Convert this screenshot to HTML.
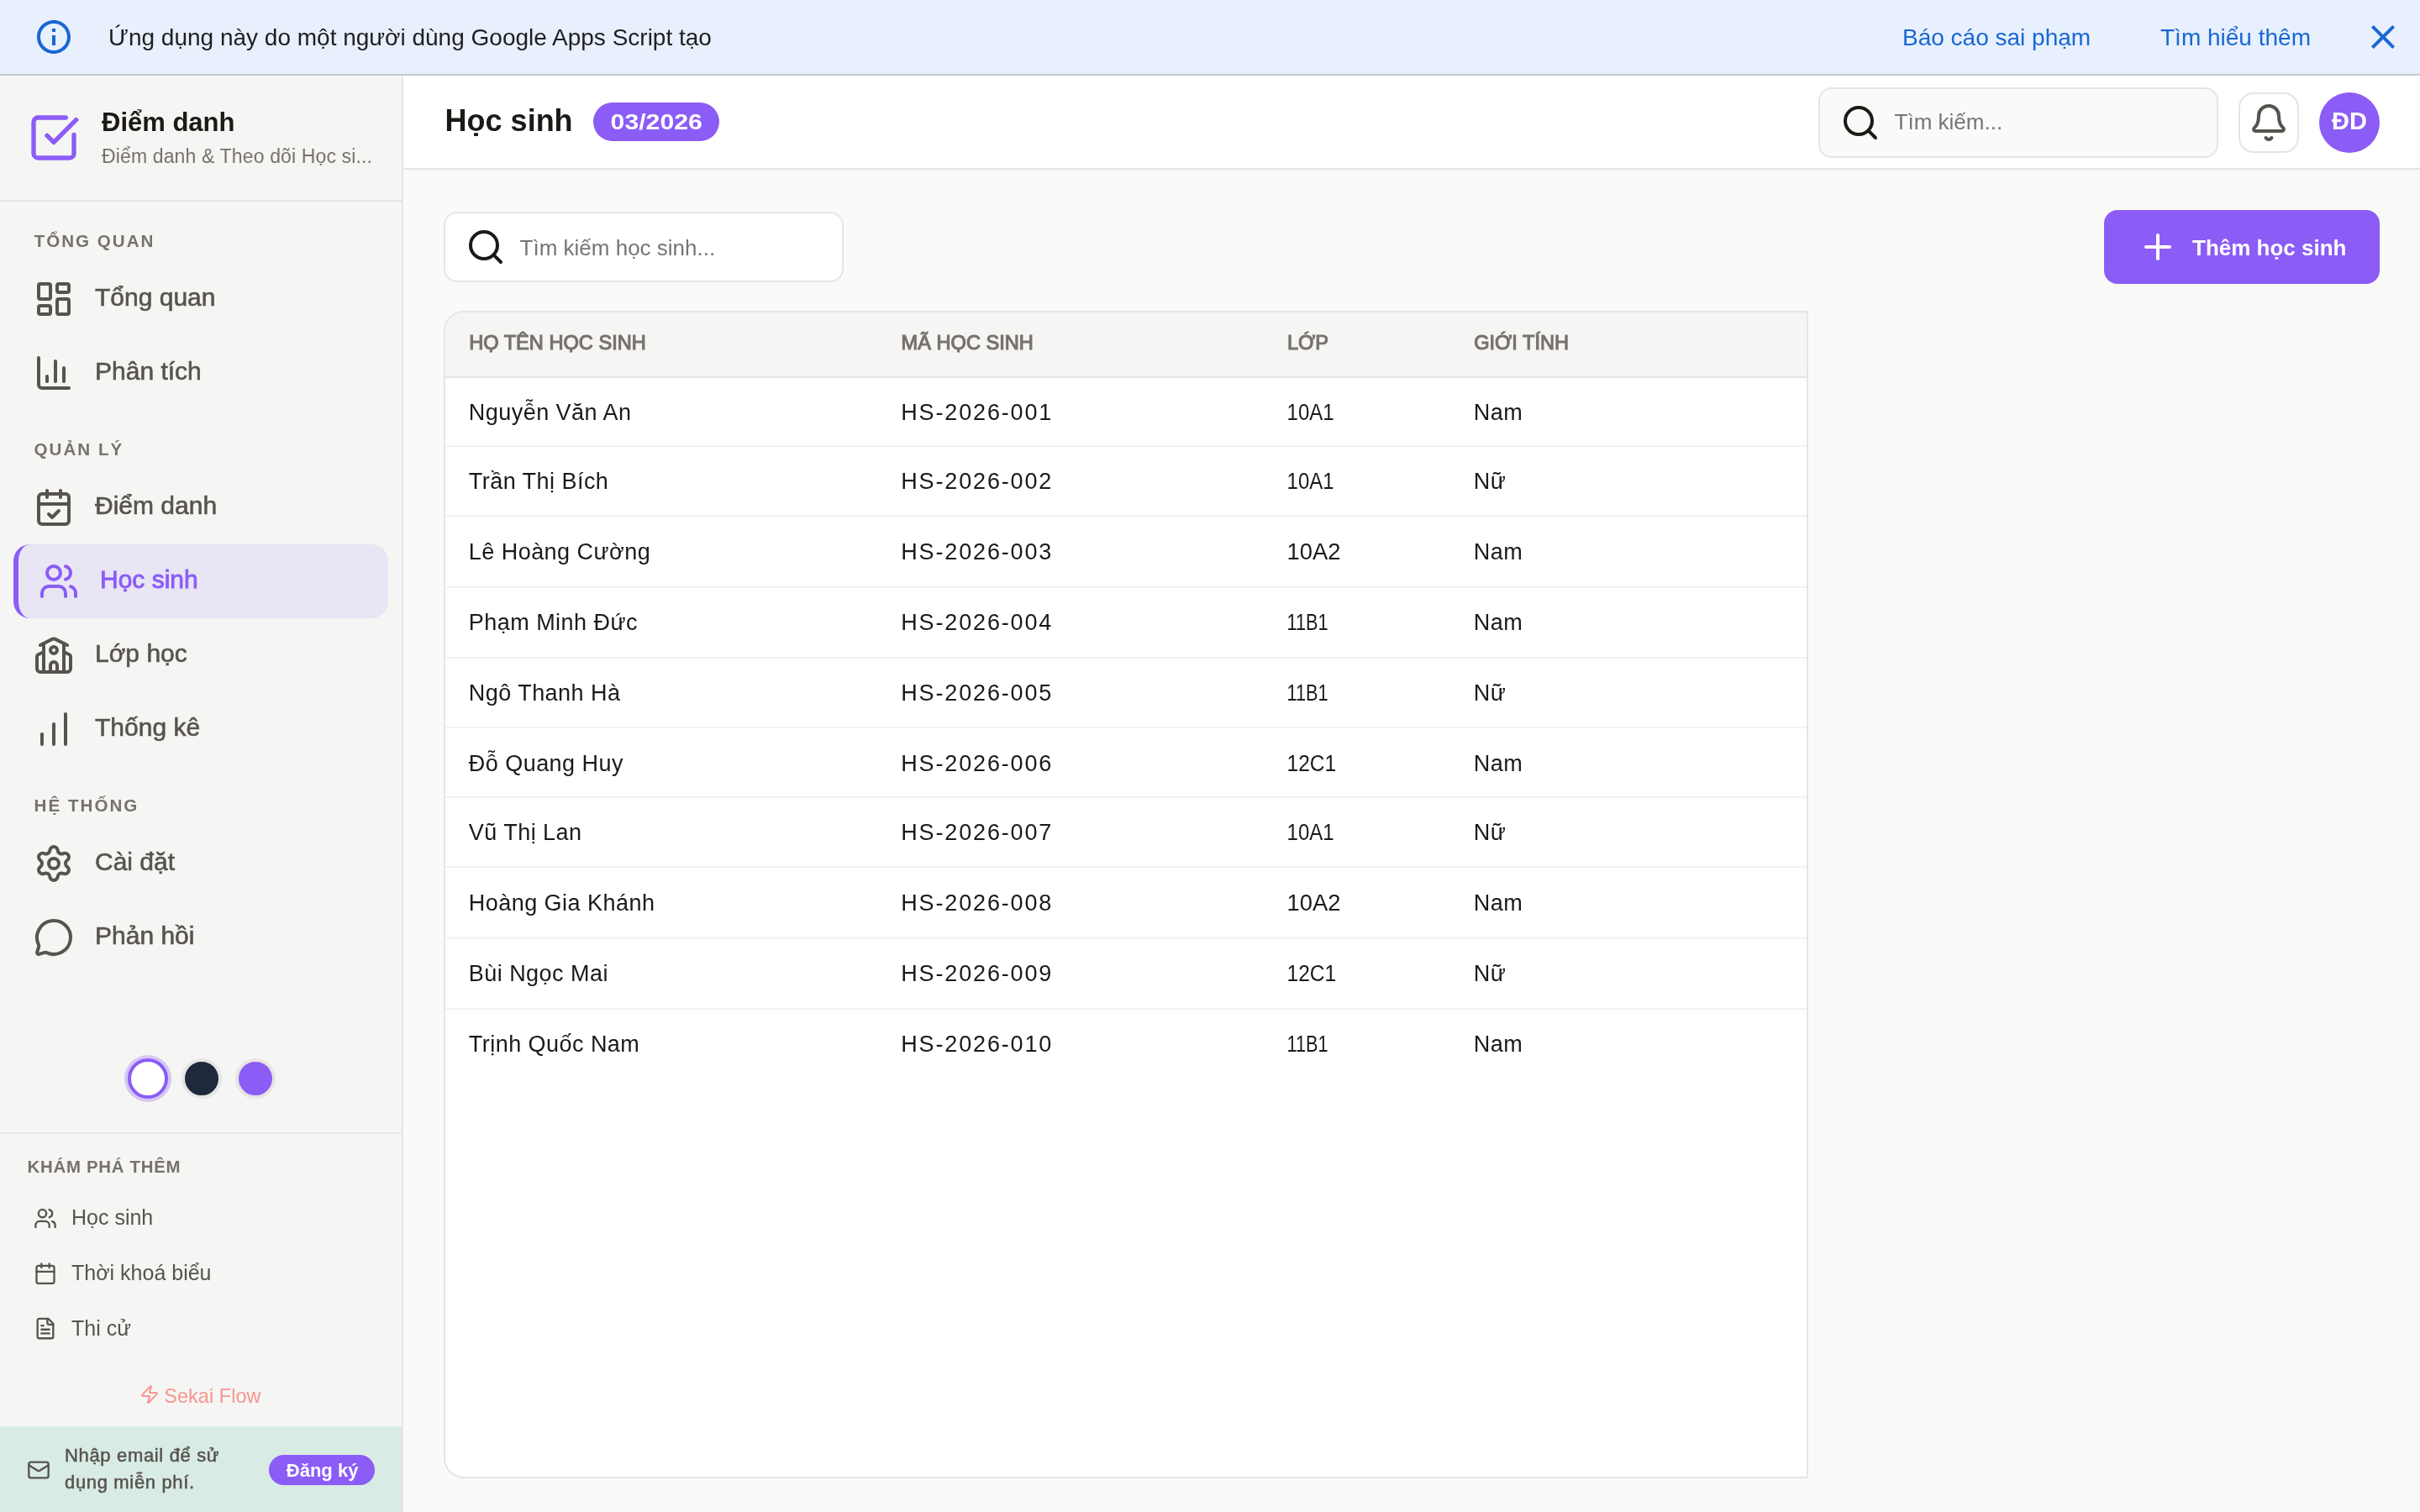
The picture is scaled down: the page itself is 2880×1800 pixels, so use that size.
<!DOCTYPE html>
<html lang="vi">
<head>
<meta charset="utf-8">
<title>Học sinh</title>
<style>
*{box-sizing:border-box;margin:0;padding:0}
html,body{width:1440px;height:900px;overflow:hidden}
@media (min-width:2000px){html{zoom:2}}
body{font-family:"Liberation Sans",sans-serif;background:#fafaf9;position:relative;color:#1c1917}
.b{position:absolute}
#ov{position:absolute;left:0;top:0;width:1440px;height:900px;font-family:"Liberation Sans",sans-serif;will-change:transform}
#ov svg{fill:none;stroke-width:2;stroke-linecap:round;stroke-linejoin:round;overflow:visible}
#ov text{white-space:pre}
</style>
</head>
<body>
<div class="b" style="left:0;top:0;width:1440px;height:45px;background:#e8f0fe;border-bottom:1px solid #c7c9cc"></div>
<div class="b" style="left:0;top:45px;width:240px;height:855px;background:#f5f5f4;border-right:1px solid #e7e5e4"></div>
<div class="b" style="left:0;top:119px;width:239px;height:1px;background:#e7e5e4"></div>
<div class="b" style="left:8px;top:324px;width:223px;height:44px;background:#e8e5f4;border-radius:10px;border-left:3px solid #8b5cf6"></div>
<div class="b" style="left:76px;top:630px;width:24px;height:24px;border-radius:50%;background:#fff;border:2px solid #8b5cf6;box-shadow:0 0 0 2px rgba(139,92,246,.3)"></div>
<div class="b" style="left:108px;top:630px;width:24px;height:24px;border-radius:50%;background:#1e293b;border:2px solid #e7e5e4"></div>
<div class="b" style="left:140px;top:630px;width:24px;height:24px;border-radius:50%;background:#8b5cf6;border:2px solid #e7e5e4"></div>
<div class="b" style="left:0;top:674px;width:239px;height:1px;background:#e7e5e4"></div>
<div class="b" style="left:0;top:849px;width:239px;height:51px;background:#d9ebe5"></div>
<div class="b" style="left:160px;top:866px;width:63px;height:18px;border-radius:9px;background:#8b5cf6"></div>
<div class="b" style="left:240px;top:45px;width:1200px;height:56px;background:#fff;border-bottom:1px solid #e7e5e4"></div>
<div class="b" style="left:353px;top:61px;width:75px;height:23px;border-radius:12px;background:#8b5cf6"></div>
<div class="b" style="left:1082px;top:52px;width:238px;height:42px;border-radius:8px;background:#fafaf9;border:1px solid #e7e5e4"></div>
<div class="b" style="left:1332px;top:55px;width:36px;height:36px;border-radius:9px;background:#fff;border:1px solid #e7e5e4"></div>
<div class="b" style="left:1380px;top:55px;width:36px;height:36px;border-radius:50%;background:#8b5cf6"></div>
<div class="b" style="left:264px;top:126px;width:238px;height:42px;border-radius:8px;background:#fff;border:1px solid #e7e5e4"></div>
<div class="b" style="left:1252px;top:125px;width:164px;height:44px;border-radius:8px;background:#8b5cf6"></div>
<div class="b" style="left:264px;top:185px;width:812px;height:695px;border-radius:12px 0 0 12px;background:#fff;border:1px solid #e7e5e4;overflow:hidden"><div class="b" style="left:0;top:0;width:810px;height:39px;background:#f5f5f4;border-bottom:1px solid #e7e5e4"></div></div>
<div class="b" style="left:265px;top:264.80px;width:810px;height:1px;background:#f3f2f1"></div>
<div class="b" style="left:265px;top:306.60px;width:810px;height:1px;background:#f3f2f1"></div>
<div class="b" style="left:265px;top:348.90px;width:810px;height:1px;background:#f3f2f1"></div>
<div class="b" style="left:265px;top:391.05px;width:810px;height:1px;background:#f3f2f1"></div>
<div class="b" style="left:265px;top:432.60px;width:810px;height:1px;background:#f3f2f1"></div>
<div class="b" style="left:265px;top:474.05px;width:810px;height:1px;background:#f3f2f1"></div>
<div class="b" style="left:265px;top:515.50px;width:810px;height:1px;background:#f3f2f1"></div>
<div class="b" style="left:265px;top:557.80px;width:810px;height:1px;background:#f3f2f1"></div>
<div class="b" style="left:265px;top:600.00px;width:810px;height:1px;background:#f3f2f1"></div>
<svg id="ov" viewBox="0 0 1440 900">
<svg x="20" y="10" width="24" height="24" viewBox="0 0 24 24" style="fill:#1967d2;stroke:none"><path d="M11 7h2v2h-2zm0 4h2v6h-2zm1-9C6.48 2 2 6.48 2 12s4.48 10 10 10 10-4.48 10-10S17.52 2 12 2zm0 18c-4.41 0-8-3.59-8-8s3.59-8 8-8 8 3.59 8 8-3.59 8-8 8z"/></svg>
<text x="64.50" y="26.90" font-size="14" fill="#1f1f1f">Ứng dụng này do một người dùng Google Apps Script tạo</text>
<text x="1132.00" y="26.90" font-size="14" fill="#1967d2">Báo cáo sai phạm</text>
<text x="1285.50" y="26.90" font-size="14" fill="#1967d2">Tìm hiểu thêm</text>
<svg x="1406" y="10" width="24" height="24" viewBox="0 0 24 24" style="fill:#1967d2;stroke:none"><path d="M19 6.41L17.59 5 12 10.59 6.41 5 5 6.41 10.59 12 5 17.59 6.41 19 12 13.41 17.59 19 19 17.59 13.41 12z"/></svg>
<svg x="16" y="66" width="32" height="32" viewBox="0 0 24 24" stroke="#8b5cf6"><path d="M21 10.656V19a2 2 0 0 1-2 2H5a2 2 0 0 1-2-2V5a2 2 0 0 1 2-2h12.344"/><path d="m9 11 3 3L22 4"/></svg>
<text x="60.50" y="78.00" font-size="15.5" fill="#1c1917" font-weight="bold">Điểm danh</text>
<text x="60.50" y="97.00" font-size="11.5" fill="#78716c" style="letter-spacing:0.07px;">Điểm danh &amp; Theo dõi Học si...</text>
<text x="20.30" y="147.00" font-size="10.3" fill="#78716c" font-weight="bold" style="letter-spacing:1.0px;">TỔNG QUAN</text>
<svg x="20" y="166" width="24" height="24" viewBox="0 0 24 24" stroke="#57534e"><rect width="7" height="9" x="3" y="3" rx="1"/><rect width="7" height="5" x="14" y="3" rx="1"/><rect width="7" height="9" x="14" y="12" rx="1"/><rect width="7" height="5" x="3" y="16" rx="1"/></svg>
<text x="56.50" y="182.00" font-size="15" fill="#57534e" style="stroke:#57534e;stroke-width:0.3px">Tổng quan</text>
<svg x="20" y="210" width="24" height="24" viewBox="0 0 24 24" stroke="#57534e"><path d="M3 3v16a2 2 0 0 0 2 2h16"/><path d="M18 17V9"/><path d="M13 17V5"/><path d="M8 17v-3"/></svg>
<text x="56.50" y="226.00" font-size="15" fill="#57534e" style="stroke:#57534e;stroke-width:0.3px">Phân tích</text>
<text x="20.30" y="271.00" font-size="10.3" fill="#78716c" font-weight="bold" style="letter-spacing:1.0px;">QUẢN LÝ</text>
<svg x="20" y="290" width="24" height="24" viewBox="0 0 24 24" stroke="#57534e"><path d="M8 2v4"/><path d="M16 2v4"/><rect width="18" height="18" x="3" y="4" rx="2"/><path d="M3 10h18"/><path d="m9 16 2 2 4-4"/></svg>
<text x="56.50" y="306.00" font-size="15" fill="#57534e" style="stroke:#57534e;stroke-width:0.3px">Điểm danh</text>
<svg x="23" y="334" width="24" height="24" viewBox="0 0 24 24" stroke="#8b5cf6"><path d="M16 21v-2a4 4 0 0 0-4-4H6a4 4 0 0 0-4 4v2"/><circle cx="9" cy="7" r="4"/><path d="M22 21v-2a4 4 0 0 0-3-3.87"/><path d="M16 3.13a4 4 0 0 1 0 7.75"/></svg>
<text x="59.50" y="350.00" font-size="15" fill="#8b5cf6" style="stroke:#8b5cf6;stroke-width:0.45px">Học sinh</text>
<svg x="20" y="378" width="24" height="24" viewBox="0 0 24 24" stroke="#57534e"><path d="M14 22v-4a2 2 0 1 0-4 0v4"/><path d="m18 10 3.447 1.724a1 1 0 0 1 .553.894V20a2 2 0 0 1-2 2H4a2 2 0 0 1-2-2v-7.382a1 1 0 0 1 .553-.894L6 10"/><path d="M18 5v17"/><path d="m4 6 7.106-3.553a2 2 0 0 1 1.788 0L20 6"/><path d="M6 5v17"/><circle cx="12" cy="9" r="2"/></svg>
<text x="56.50" y="394.00" font-size="15" fill="#57534e" style="stroke:#57534e;stroke-width:0.3px">Lớp học</text>
<svg x="20" y="422" width="24" height="24" viewBox="0 0 24 24" stroke="#57534e"><path d="M5 21v-6"/><path d="M12 21V9"/><path d="M19 21V3"/></svg>
<text x="56.50" y="438.00" font-size="15" fill="#57534e" style="stroke:#57534e;stroke-width:0.3px">Thống kê</text>
<text x="20.30" y="483.00" font-size="10.3" fill="#78716c" font-weight="bold" style="letter-spacing:1.0px;">HỆ THỐNG</text>
<svg x="20" y="502" width="24" height="24" viewBox="0 0 24 24" stroke="#57534e"><path d="M9.671 4.136a2.34 2.34 0 0 1 4.659 0 2.34 2.34 0 0 0 3.319 1.915 2.34 2.34 0 0 1 2.33 4.033 2.34 2.34 0 0 0 0 3.831 2.34 2.34 0 0 1-2.33 4.033 2.34 2.34 0 0 0-3.319 1.915 2.34 2.34 0 0 1-4.659 0 2.34 2.34 0 0 0-3.32-1.915 2.34 2.34 0 0 1-2.33-4.033 2.34 2.34 0 0 0 0-3.831A2.34 2.34 0 0 1 6.35 6.051a2.34 2.34 0 0 0 3.319-1.915"/><circle cx="12" cy="12" r="3"/></svg>
<text x="56.50" y="518.00" font-size="15" fill="#57534e" style="stroke:#57534e;stroke-width:0.3px">Cài đặt</text>
<svg x="20" y="546" width="24" height="24" viewBox="0 0 24 24" stroke="#57534e"><path d="M2.992 16.342a2 2 0 0 1 .094 1.167l-1.065 3.29a1 1 0 0 0 1.236 1.168l3.413-.998a2 2 0 0 1 1.099.092 10 10 0 1 0-4.777-4.719"/></svg>
<text x="56.50" y="562.00" font-size="15" fill="#57534e" style="stroke:#57534e;stroke-width:0.3px">Phản hồi</text>
<text x="16.30" y="698.00" font-size="10.2" fill="#78716c" font-weight="bold" style="letter-spacing:0.36px;">KHÁM PHÁ THÊM</text>
<svg x="20" y="718.2" width="14" height="14" viewBox="0 0 24 24" stroke="#57534e"><path d="M16 21v-2a4 4 0 0 0-4-4H6a4 4 0 0 0-4 4v2"/><circle cx="9" cy="7" r="4"/><path d="M22 21v-2a4 4 0 0 0-3-3.87"/><path d="M16 3.13a4 4 0 0 1 0 7.75"/></svg>
<text x="42.50" y="729.20" font-size="12.5" fill="#57534e">Học sinh</text>
<svg x="20" y="751.1" width="14" height="14" viewBox="0 0 24 24" stroke="#57534e"><path d="M8 2v4"/><path d="M16 2v4"/><rect width="18" height="18" x="3" y="4" rx="2"/><path d="M3 10h18"/></svg>
<text x="42.50" y="762.10" font-size="12.5" fill="#57534e">Thời khoá biểu</text>
<svg x="20" y="783.8" width="14" height="14" viewBox="0 0 24 24" stroke="#57534e"><path d="M15 2H6a2 2 0 0 0-2 2v16a2 2 0 0 0 2 2h12a2 2 0 0 0 2-2V7Z"/><path d="M14 2v4a2 2 0 0 0 2 2h4"/><path d="M10 9H8"/><path d="M16 13H8"/><path d="M16 17H8"/></svg>
<text x="42.50" y="794.80" font-size="12.5" fill="#57534e">Thi cử</text>
<svg x="83" y="824" width="12" height="12" viewBox="0 0 24 24" stroke="#f7958f"><path d="M4 14a1 1 0 0 1-.78-1.63l9.9-10.2a.5.5 0 0 1 .86.46l-1.92 6.02A1 1 0 0 0 13 10h7a1 1 0 0 1 .78 1.63l-9.9 10.2a.5.5 0 0 1-.86-.46l1.92-6.02A1 1 0 0 0 11 14z"/></svg>
<text x="97.60" y="834.80" font-size="11.7" fill="#f7958f" style="letter-spacing:0.05px;">Sekai Flow</text>
<svg x="16" y="868" width="14" height="14" viewBox="0 0 24 24" stroke="#57534e"><rect width="20" height="16" x="2" y="4" rx="2"/><path d="m22 7-8.97 5.7a1.94 1.94 0 0 1-2.06 0L2 7"/></svg>
<text x="38.50" y="869.80" font-size="11" fill="#57534e" style="letter-spacing:0.33px;stroke:#57534e;stroke-width:0.25px">Nhập email để sử</text>
<text x="38.50" y="885.90" font-size="11" fill="#57534e" style="letter-spacing:0.33px;stroke:#57534e;stroke-width:0.25px">dụng miễn phí.</text>
<text x="170.40" y="879.00" font-size="11" fill="#fff" font-weight="bold">Đăng ký</text>
<text x="264.80" y="78.00" font-size="18" fill="#1c1917" font-weight="bold">Học sinh</text>
<text x="363.30" y="77.20" font-size="13" fill="#fff" font-weight="bold" textLength="54.6" lengthAdjust="spacingAndGlyphs">03/2026</text>
<svg x="1095" y="61" width="24" height="24" viewBox="0 0 24 24" stroke="#1c1917"><circle cx="11" cy="11" r="8"/><path d="m21 21-4.3-4.3"/></svg>
<text x="1127.30" y="77.00" font-size="13" fill="#757575">Tìm kiếm...</text>
<svg x="1338" y="61" width="24" height="24" viewBox="0 0 24 24" stroke="#57534e"><path d="M10.268 21a2 2 0 0 0 3.464 0"/><path d="M3.262 15.326A1 1 0 0 0 4 17h16a1 1 0 0 0 .74-1.673C19.41 13.956 18 12.499 18 8A6 6 0 0 0 6 8c0 4.499-1.411 5.956-2.738 7.326"/></svg>
<text x="1387.50" y="77.00" font-size="14.5" fill="#fff" font-weight="bold">ĐD</text>
<svg x="277" y="135" width="24" height="24" viewBox="0 0 24 24" stroke="#1c1917"><circle cx="11" cy="11" r="8"/><path d="m21 21-4.3-4.3"/></svg>
<text x="309.30" y="152.00" font-size="13" fill="#757575">Tìm kiếm học sinh...</text>
<svg x="1272" y="135" width="24" height="24" viewBox="0 0 24 24" stroke="#fff" stroke-width="2.5"><path d="M5 12h14"/><path d="M12 5v14"/></svg>
<text x="1304.50" y="151.90" font-size="13" fill="#fff" font-weight="bold">Thêm học sinh</text>
<text x="279.10" y="208.00" font-size="11.8" fill="#78716c" style="stroke:#78716c;stroke-width:0.55px">HỌ TÊN HỌC SINH</text>
<text x="536.30" y="208.00" font-size="11.8" fill="#78716c" style="stroke:#78716c;stroke-width:0.55px">MÃ HỌC SINH</text>
<text x="766.00" y="208.00" font-size="11.8" fill="#78716c" style="stroke:#78716c;stroke-width:0.55px">LỚP</text>
<text x="877.10" y="208.00" font-size="11.8" fill="#78716c" style="stroke:#78716c;stroke-width:0.55px">GIỚI TÍNH</text>
<text x="278.90" y="250.08" font-size="13.5" fill="#1c1917" style="letter-spacing:0.23px;">Nguyễn Văn An</text>
<text x="536.10" y="250.08" font-size="13.5" fill="#1c1917" style="letter-spacing:0.93px;">HS-2026-001</text>
<text x="765.80" y="250.08" font-size="13.5" fill="#1c1917" textLength="28.0" lengthAdjust="spacingAndGlyphs">10A1</text>
<text x="876.90" y="250.08" font-size="13.5" fill="#1c1917" style="letter-spacing:0.25px;">Nam</text>
<text x="278.90" y="291.10" font-size="13.5" fill="#1c1917" style="letter-spacing:0.23px;">Trần Thị Bích</text>
<text x="536.10" y="291.10" font-size="13.5" fill="#1c1917" style="letter-spacing:0.93px;">HS-2026-002</text>
<text x="765.80" y="291.10" font-size="13.5" fill="#1c1917" textLength="28.0" lengthAdjust="spacingAndGlyphs">10A1</text>
<text x="876.90" y="291.10" font-size="13.5" fill="#1c1917" style="letter-spacing:0.25px;">Nữ</text>
<text x="278.90" y="332.75" font-size="13.5" fill="#1c1917" style="letter-spacing:0.23px;">Lê Hoàng Cường</text>
<text x="536.10" y="332.75" font-size="13.5" fill="#1c1917" style="letter-spacing:0.93px;">HS-2026-003</text>
<text x="765.80" y="332.75" font-size="13.5" fill="#1c1917" textLength="31.9" lengthAdjust="spacingAndGlyphs">10A2</text>
<text x="876.90" y="332.75" font-size="13.5" fill="#1c1917" style="letter-spacing:0.25px;">Nam</text>
<text x="278.90" y="375.00" font-size="13.5" fill="#1c1917" style="letter-spacing:0.23px;">Phạm Minh Đức</text>
<text x="536.10" y="375.00" font-size="13.5" fill="#1c1917" style="letter-spacing:0.93px;">HS-2026-004</text>
<text x="765.80" y="375.00" font-size="13.5" fill="#1c1917" textLength="24.5" lengthAdjust="spacingAndGlyphs">11B1</text>
<text x="876.90" y="375.00" font-size="13.5" fill="#1c1917" style="letter-spacing:0.25px;">Nam</text>
<text x="278.90" y="417.00" font-size="13.5" fill="#1c1917" style="letter-spacing:0.23px;">Ngô Thanh Hà</text>
<text x="536.10" y="417.00" font-size="13.5" fill="#1c1917" style="letter-spacing:0.93px;">HS-2026-005</text>
<text x="765.80" y="417.00" font-size="13.5" fill="#1c1917" textLength="24.5" lengthAdjust="spacingAndGlyphs">11B1</text>
<text x="876.90" y="417.00" font-size="13.5" fill="#1c1917" style="letter-spacing:0.25px;">Nữ</text>
<text x="278.90" y="458.95" font-size="13.5" fill="#1c1917" style="letter-spacing:0.23px;">Đỗ Quang Huy</text>
<text x="536.10" y="458.95" font-size="13.5" fill="#1c1917" style="letter-spacing:0.93px;">HS-2026-006</text>
<text x="765.80" y="458.95" font-size="13.5" fill="#1c1917" textLength="29.3" lengthAdjust="spacingAndGlyphs">12C1</text>
<text x="876.90" y="458.95" font-size="13.5" fill="#1c1917" style="letter-spacing:0.25px;">Nam</text>
<text x="278.90" y="499.95" font-size="13.5" fill="#1c1917" style="letter-spacing:0.23px;">Vũ Thị Lan</text>
<text x="536.10" y="499.95" font-size="13.5" fill="#1c1917" style="letter-spacing:0.93px;">HS-2026-007</text>
<text x="765.80" y="499.95" font-size="13.5" fill="#1c1917" textLength="28.0" lengthAdjust="spacingAndGlyphs">10A1</text>
<text x="876.90" y="499.95" font-size="13.5" fill="#1c1917" style="letter-spacing:0.25px;">Nữ</text>
<text x="278.90" y="541.95" font-size="13.5" fill="#1c1917" style="letter-spacing:0.23px;">Hoàng Gia Khánh</text>
<text x="536.10" y="541.95" font-size="13.5" fill="#1c1917" style="letter-spacing:0.93px;">HS-2026-008</text>
<text x="765.80" y="541.95" font-size="13.5" fill="#1c1917" textLength="31.9" lengthAdjust="spacingAndGlyphs">10A2</text>
<text x="876.90" y="541.95" font-size="13.5" fill="#1c1917" style="letter-spacing:0.25px;">Nam</text>
<text x="278.90" y="583.95" font-size="13.5" fill="#1c1917" style="letter-spacing:0.23px;">Bùi Ngọc Mai</text>
<text x="536.10" y="583.95" font-size="13.5" fill="#1c1917" style="letter-spacing:0.93px;">HS-2026-009</text>
<text x="765.80" y="583.95" font-size="13.5" fill="#1c1917" textLength="29.3" lengthAdjust="spacingAndGlyphs">12C1</text>
<text x="876.90" y="583.95" font-size="13.5" fill="#1c1917" style="letter-spacing:0.25px;">Nữ</text>
<text x="278.90" y="625.95" font-size="13.5" fill="#1c1917" style="letter-spacing:0.23px;">Trịnh Quốc Nam</text>
<text x="536.10" y="625.95" font-size="13.5" fill="#1c1917" style="letter-spacing:0.93px;">HS-2026-010</text>
<text x="765.80" y="625.95" font-size="13.5" fill="#1c1917" textLength="24.5" lengthAdjust="spacingAndGlyphs">11B1</text>
<text x="876.90" y="625.95" font-size="13.5" fill="#1c1917" style="letter-spacing:0.25px;">Nam</text>
</svg>
</body>
</html>
